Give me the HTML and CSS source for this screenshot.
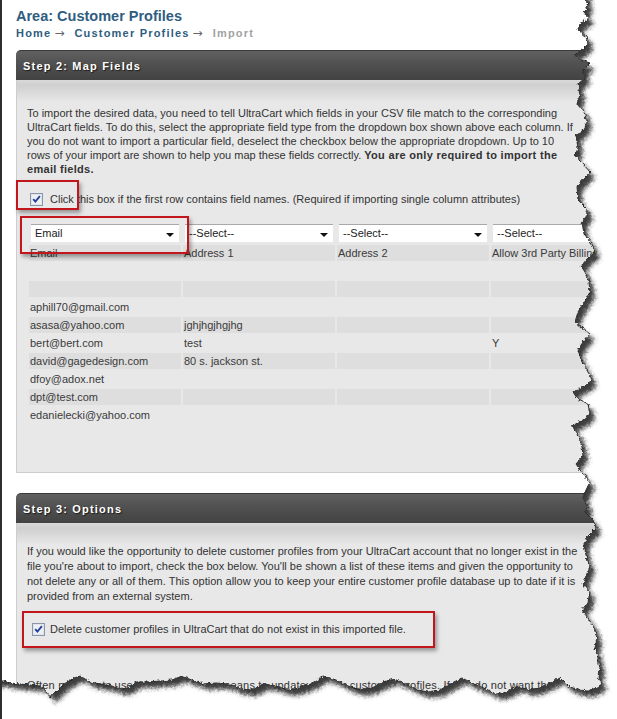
FILE: index.html
```html
<!DOCTYPE html>
<html lang="en">
<head>
<meta charset="utf-8">
<title>Area: Customer Profiles - Import</title>
<link rel="stylesheet" href="styles.css">
</head>
<body>
<div class="frame">
  <h1 class="area-title">Area: Customer Profiles</h1>
  <nav class="crumbs">
    <a class="crumb" href="#">Home</a><span class="sep">→</span><a class="crumb" href="#">Customer Profiles</a><span class="sep">→</span><span class="current">Import</span>
  </nav>

  <section class="panel panel-map">
    <h2 class="panel-head">Step 2: Map Fields</h2>
    <div class="panel-body">
      <p class="intro">To import the desired data, you need to tell UltraCart which fields in your CSV file match to the corresponding UltraCart fields. To do this, select the appropriate field type from the dropdown box shown above each column. If you do not want to import a particular field, deselect the checkbox below the appropriate dropdown. Up to 10 rows of your import are shown to help you map these fields correctly. <strong>You are only required to import the email fields.</strong></p>

      <label class="check-row">
        <svg class="tick" width="13" height="13" viewBox="0 0 13 13" aria-hidden="true">
          <rect x="0.5" y="0.5" width="12" height="12" fill="#eef0f3" stroke="#8a96aa"/>
          <rect x="1.5" y="1.5" width="10" height="10" fill="none" stroke="#dfe3ea"/>
          <path d="M3.2 6.1 L5.4 8.6 L9.9 3.1" fill="none" stroke="#24409a" stroke-width="1.9"/>
        </svg>
        <span>Click this box if the first row contains field names. (Required if importing single column attributes)</span>
      </label>

      <table class="map-table">
        <colgroup><col><col><col><col><col></colgroup>
        <tr class="pick-row">
          <td><div class="pick">Email</div></td>
          <td><div class="pick">--Select--</div></td>
          <td><div class="pick">--Select--</div></td>
          <td><div class="pick">--Select--</div></td>
          <td><div class="pick">--Select--</div></td>
        </tr>
        <tr class="shade"><td>Email</td><td>Address 1</td><td>Address 2</td><td>Allow 3rd Party Billing</td><td>Allow 3rd Party Shipping</td></tr>
        <tr><td></td><td></td><td></td><td></td><td></td></tr>
        <tr class="shade"><td></td><td></td><td></td><td></td><td></td></tr>
        <tr><td>aphill70@gmail.com</td><td></td><td></td><td></td><td></td></tr>
        <tr class="shade"><td>asasa@yahoo.com</td><td>jghjhgjhgjhg</td><td></td><td></td><td></td></tr>
        <tr><td>bert@bert.com</td><td>test</td><td></td><td>Y</td><td></td></tr>
        <tr class="shade"><td>david@gagedesign.com</td><td>80 s. jackson st.</td><td></td><td></td><td></td></tr>
        <tr><td>dfoy@adox.net</td><td></td><td></td><td></td><td></td></tr>
        <tr class="shade"><td>dpt@test.com</td><td></td><td></td><td></td><td></td></tr>
        <tr><td>edanielecki@yahoo.com</td><td></td><td></td><td></td><td></td></tr>
      </table>
    </div>
  </section>

  <section class="panel panel-options">
    <h2 class="panel-head">Step 3: Options</h2>
    <div class="panel-body">
      <p class="intro intro-loose">If you would like the opportunity to delete customer profiles from your UltraCart account that no longer exist in the file you're about to import, check the box below. You'll be shown a list of these items and given the opportunity to not delete any or all of them. This option allow you to keep your entire customer profile database up to date if it is provided from an external system.</p>

      <label class="check-row check-row-wide">
        <svg class="tick" width="13" height="13" viewBox="0 0 13 13" aria-hidden="true">
          <rect x="0.5" y="0.5" width="12" height="12" fill="#eef0f3" stroke="#8a96aa"/>
          <rect x="1.5" y="1.5" width="10" height="10" fill="none" stroke="#dfe3ea"/>
          <path d="M3.2 6.1 L5.4 8.6 L9.9 3.1" fill="none" stroke="#24409a" stroke-width="1.9"/>
        </svg>
        <span>Delete customer profiles in UltraCart that do not exist in this imported file.</span>
      </label>

      <p class="note">Often merchants use this feature as a means to update all their customer profiles. If you do not want the</p>
    </div>
  </section>

  <!-- red highlight frames drawn over the form -->
  <div class="callout callout-header-check"></div>
  <div class="callout callout-email"></div>
  <div class="callout callout-delete"></div>

  <!-- torn paper edge along the right and bottom -->
  <svg class="torn" width="617" height="719" viewBox="0 0 617 719" aria-hidden="true">
    <defs>
      <filter id="edgeBlur" x="-5%" y="-5%" width="110%" height="110%">
        <feGaussianBlur stdDeviation="2"/>
      </filter>
      <filter id="roughen" filterUnits="userSpaceOnUse" x="-20" y="-20" width="680" height="780">
        <feTurbulence type="fractalNoise" baseFrequency="0.35" numOctaves="2" seed="7" result="noise"/>
        <feDisplacementMap in="SourceGraphic" in2="noise" scale="4" xChannelSelector="R" yChannelSelector="G"/>
      </filter>
      <clipPath id="outsidePaper">
        <path clip-rule="evenodd" d="M-10 -10 H640 V740 H-10 Z M586 -10 L586 0 L588 6 L584 12 L589 18 L580 24 L578 30 L586 36 L588 44 L582 50 L574 55 L581 60 L590 63 L583 70 L585 78 L578 84 L580 95 L577 104 L584 112 L587 122 L583 130 L576 136 L578 148 L575 156 L583 164 L590 172 L584 178 L577 186 L578 200 L586 208 L588 214 L582 222 L584 234 L591 242 L595 252 L588 258 L581 266 L585 272 L589 282 L590 292 L584 302 L578 312 L575 322 L582 328 L590 334 L583 342 L578 350 L582 362 L588 372 L592 380 L585 386 L573 392 L577 398 L588 404 L590 414 L583 420 L572 426 L578 434 L582 446 L583 456 L576 464 L583 474 L590 482 L586 490 L583 498 L588 506 L585 512 L593 520 L596 528 L588 536 L584 544 L586 556 L590 566 L586 576 L583 584 L590 592 L588 602 L582 610 L588 618 L594 628 L597 638 L595 648 L598 658 L600 668 L598 676 L602 684 L596 688 L588 691 L578 690 L568 686 L560 678 L552 682 L540 688 L528 690 L518 686 L506 692 L496 694 L486 689 L474 684 L462 678 L452 683 L440 690 L428 692 L418 690 L406 684 L394 679 L384 682 L372 688 L360 690 L348 686 L336 680 L324 676 L314 682 L300 688 L288 690 L276 686 L264 684 L252 690 L240 689 L228 684 L216 683 L204 684 L194 681 L182 676 L172 680 L160 681 L148 682 L136 682 L128 688 L120 689 L112 686 L100 684 L90 682 L80 676 L74 678 L64 684 L56 692 L50 697 L46 690 L40 686 L30 685 L20 684 L10 683 L4 681 L-10 681 L-10 -10 Z"/>
      </clipPath>
    </defs>
    <g filter="url(#roughen)">
      <path class="torn-outside" fill-rule="evenodd" d="M-10 -10 H640 V740 H-10 Z M586 -10 L586 0 L588 6 L584 12 L589 18 L580 24 L578 30 L586 36 L588 44 L582 50 L574 55 L581 60 L590 63 L583 70 L585 78 L578 84 L580 95 L577 104 L584 112 L587 122 L583 130 L576 136 L578 148 L575 156 L583 164 L590 172 L584 178 L577 186 L578 200 L586 208 L588 214 L582 222 L584 234 L591 242 L595 252 L588 258 L581 266 L585 272 L589 282 L590 292 L584 302 L578 312 L575 322 L582 328 L590 334 L583 342 L578 350 L582 362 L588 372 L592 380 L585 386 L573 392 L577 398 L588 404 L590 414 L583 420 L572 426 L578 434 L582 446 L583 456 L576 464 L583 474 L590 482 L586 490 L583 498 L588 506 L585 512 L593 520 L596 528 L588 536 L584 544 L586 556 L590 566 L586 576 L583 584 L590 592 L588 602 L582 610 L588 618 L594 628 L597 638 L595 648 L598 658 L600 668 L598 676 L602 684 L596 688 L588 691 L578 690 L568 686 L560 678 L552 682 L540 688 L528 690 L518 686 L506 692 L496 694 L486 689 L474 684 L462 678 L452 683 L440 690 L428 692 L418 690 L406 684 L394 679 L384 682 L372 688 L360 690 L348 686 L336 680 L324 676 L314 682 L300 688 L288 690 L276 686 L264 684 L252 690 L240 689 L228 684 L216 683 L204 684 L194 681 L182 676 L172 680 L160 681 L148 682 L136 682 L128 688 L120 689 L112 686 L100 684 L90 682 L80 676 L74 678 L64 684 L56 692 L50 697 L46 690 L40 686 L30 685 L20 684 L10 683 L4 681 L-10 681 L-10 -10 Z"/>
      <g clip-path="url(#outsidePaper)">
        <path class="torn-shadow" filter="url(#edgeBlur)" transform="translate(5 6)" d="M586 -10 L586 0 L588 6 L584 12 L589 18 L580 24 L578 30 L586 36 L588 44 L582 50 L574 55 L581 60 L590 63 L583 70 L585 78 L578 84 L580 95 L577 104 L584 112 L587 122 L583 130 L576 136 L578 148 L575 156 L583 164 L590 172 L584 178 L577 186 L578 200 L586 208 L588 214 L582 222 L584 234 L591 242 L595 252 L588 258 L581 266 L585 272 L589 282 L590 292 L584 302 L578 312 L575 322 L582 328 L590 334 L583 342 L578 350 L582 362 L588 372 L592 380 L585 386 L573 392 L577 398 L588 404 L590 414 L583 420 L572 426 L578 434 L582 446 L583 456 L576 464 L583 474 L590 482 L586 490 L583 498 L588 506 L585 512 L593 520 L596 528 L588 536 L584 544 L586 556 L590 566 L586 576 L583 584 L590 592 L588 602 L582 610 L588 618 L594 628 L597 638 L595 648 L598 658 L600 668 L598 676 L602 684 L596 688 L588 691 L578 690 L568 686 L560 678 L552 682 L540 688 L528 690 L518 686 L506 692 L496 694 L486 689 L474 684 L462 678 L452 683 L440 690 L428 692 L418 690 L406 684 L394 679 L384 682 L372 688 L360 690 L348 686 L336 680 L324 676 L314 682 L300 688 L288 690 L276 686 L264 684 L252 690 L240 689 L228 684 L216 683 L204 684 L194 681 L182 676 L172 680 L160 681 L148 682 L136 682 L128 688 L120 689 L112 686 L100 684 L90 682 L80 676 L74 678 L64 684 L56 692 L50 697 L46 690 L40 686 L30 685 L20 684 L10 683 L4 681 L-10 681 L-10 -10 Z"/>
      </g>
      <path class="torn-line" d="M586 -10 L586 0 L588 6 L584 12 L589 18 L580 24 L578 30 L586 36 L588 44 L582 50 L574 55 L581 60 L590 63 L583 70 L585 78 L578 84 L580 95 L577 104 L584 112 L587 122 L583 130 L576 136 L578 148 L575 156 L583 164 L590 172 L584 178 L577 186 L578 200 L586 208 L588 214 L582 222 L584 234 L591 242 L595 252 L588 258 L581 266 L585 272 L589 282 L590 292 L584 302 L578 312 L575 322 L582 328 L590 334 L583 342 L578 350 L582 362 L588 372 L592 380 L585 386 L573 392 L577 398 L588 404 L590 414 L583 420 L572 426 L578 434 L582 446 L583 456 L576 464 L583 474 L590 482 L586 490 L583 498 L588 506 L585 512 L593 520 L596 528 L588 536 L584 544 L586 556 L590 566 L586 576 L583 584 L590 592 L588 602 L582 610 L588 618 L594 628 L597 638 L595 648 L598 658 L600 668 L598 676 L602 684 L596 688 L588 691 L578 690 L568 686 L560 678 L552 682 L540 688 L528 690 L518 686 L506 692 L496 694 L486 689 L474 684 L462 678 L452 683 L440 690 L428 692 L418 690 L406 684 L394 679 L384 682 L372 688 L360 690 L348 686 L336 680 L324 676 L314 682 L300 688 L288 690 L276 686 L264 684 L252 690 L240 689 L228 684 L216 683 L204 684 L194 681 L182 676 L172 680 L160 681 L148 682 L136 682 L128 688 L120 689 L112 686 L100 684 L90 682 L80 676 L74 678 L64 684 L56 692 L50 697 L46 690 L40 686 L30 685 L20 684 L10 683 L4 681 L-10 681"/>
    </g>
  </svg>
</div>
</body>
</html>
```
FILE: styles.css
```css
* {
  box-sizing: border-box;
}

html,
body {
  margin: 0;
  background: #fff;
}

body {
  width: 617px;
  height: 719px;
  overflow: hidden;
  font-family: "Liberation Sans", Arial, sans-serif;
  font-size: 11px;
  color: #333;
}

/* page canvas with the dark window edge on the left */
.frame {
  position: relative;
  height: 719px;
  padding: 7px 0 0 14px;
  border-left: 2px solid #2e2e2e;
  overflow: hidden;
}

.area-title {
  margin: 0;
  font-size: 14.5px;
  line-height: 18px;
  font-weight: bold;
  color: #2f5d80;
}

.crumbs {
  height: 14px;
  margin-top: 1px;
  font-size: 11px;
  line-height: 14px;
  font-weight: bold;
  letter-spacing: 1.2px;
  white-space: nowrap;
}

.crumb {
  color: #2f5d80;
  text-decoration: none;
}

.sep {
  margin: 0 10px 0 3px;
  font-family: "DejaVu Sans", sans-serif;
  font-size: 12px;
  line-height: 1;
  font-weight: normal;
  letter-spacing: 0;
  color: #666;
}

.current {
  color: #a2a2a2;
}

/* step panels */
.panel {
  margin-top: 10px;
}

.panel-options {
  margin-top: 20px;
}

.panel-head {
  margin: 0;
  height: 30px;
  padding-left: 7px;
  font-size: 11px;
  line-height: 30px;
  font-weight: bold;
  letter-spacing: 1.2px;
  color: #fff;
  text-shadow: 1px 1px 1px #1c1c1c;
  background: linear-gradient(to bottom, #616161 0, #525252 40%, #424242 100%);
  border-top: 1px solid #3a3a3a;
  border-radius: 5px 5px 0 0;
}

.panel-body {
  padding: 26px 0 47px 10px;
  background: linear-gradient(to bottom, #d9d9d9 0, #cfcfcf 5px, #e8e8e8 22px, #e8e8e8 100%);
  border-left: 1px solid #cdcdcd;
  border-bottom: 1px solid #cdcdcd;
}

.panel-options .panel-body {
  padding-top: 21px;
  padding-bottom: 30px;
}

.intro {
  margin: 0;
  max-width: 551px;
  line-height: 14px;
}

.intro strong {
  font-size: 11px;
  letter-spacing: 0.3px;
}

.intro-loose {
  line-height: 15px;
}

.check-row {
  display: flex;
  align-items: center;
  gap: 7px;
  margin-top: 16px;
  padding-left: 3px;
  line-height: 14px;
}

.check-row-wide {
  gap: 5px;
  margin-top: 18px;
  padding-left: 5px;
}

.tick {
  flex: none;
  display: block;
}

/* column mapping grid */
.map-table {
  margin-top: 14px;
  table-layout: fixed;
  width: 772px;
  border-spacing: 2px;
  border-collapse: separate;
  color: #3a3a3a;
}

.map-table col {
  width: 152px;
}

.map-table td {
  height: 16px;
  padding: 0 1px;
  line-height: 16px;
  white-space: nowrap;
  overflow: hidden;
}

.map-table .pick-row td {
  height: 21px;
  padding: 2px 0 0 2px;
  vertical-align: top;
}

.map-table .shade td {
  background: #dedede;
}

.pick {
  position: relative;
  width: 148px;
  height: 18px;
  padding-left: 4px;
  line-height: 17px;
  color: #222;
  background: #fff;
  border-top: 1px solid #a9a9a9;
}

.pick::after {
  content: "";
  position: absolute;
  right: 5px;
  top: 8px;
  border-left: 4px solid transparent;
  border-right: 4px solid transparent;
  border-top: 4px solid #111;
}

.note {
  margin: 42px 0 0;
  line-height: 14px;
  white-space: nowrap;
  letter-spacing: 0.2px;
}

/* red highlight frames */
.callout {
  position: absolute;
  border: 2px solid #c3161c;
  box-shadow: 2px 3px 4px rgba(0, 0, 0, 0.35);
}

.callout-header-check {
  left: 14px;
  top: 180px;
  width: 63px;
  height: 30px;
}

.callout-email {
  left: 18px;
  top: 216px;
  width: 169px;
  height: 38px;
}

.callout-delete {
  left: 20px;
  top: 611px;
  width: 413px;
  height: 37px;
}

/* torn paper edge */
.torn {
  position: absolute;
  left: -2px;
  top: 0;
  overflow: visible;
}

.torn-outside {
  fill: #fff;
}

.torn-shadow {
  fill: #3c3c3c;
}

.torn-line {
  fill: none;
  stroke: #2c2c2c;
  stroke-width: 1;
}
```
